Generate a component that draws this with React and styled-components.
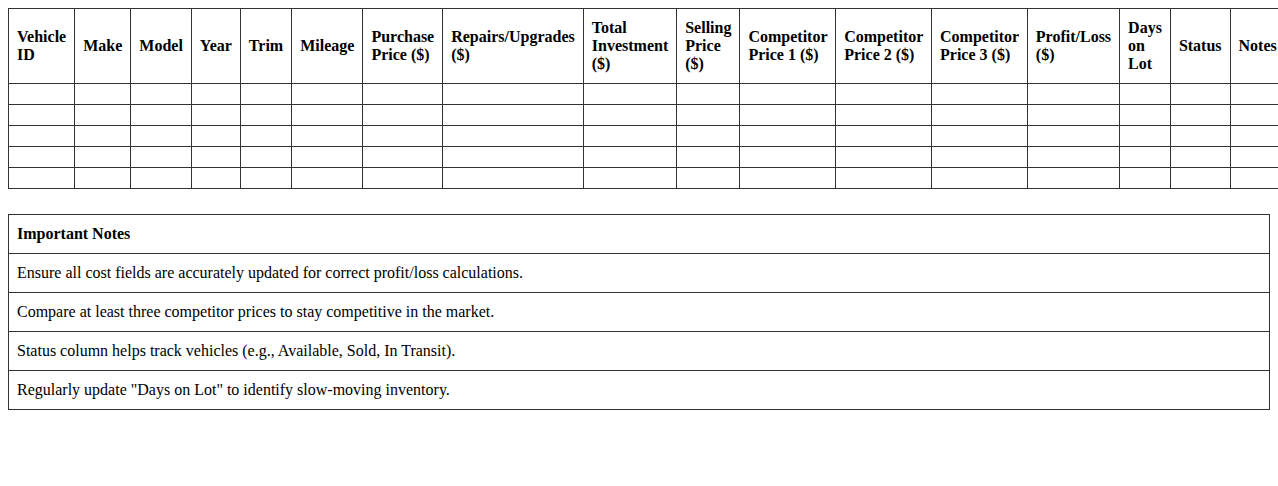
import React from "react";
import styled, { createGlobalStyle } from "styled-components";

const Global = createGlobalStyle`
  html, body { background: #fff; }
  body {
    margin: 8px 0 8px 8px;
    font-family: "Liberation Serif", "Times New Roman", serif;
    font-size: 16px;
    color: #000;
  }
`;

const Table = styled.table`
  width: ${(p) => (p.$full ? "100%" : "auto")};
  border-collapse: collapse;
`;

const NotesSection = styled.section`
  margin: 25px 8px 0 0;
`;

const Th = styled.th`
  border: 1px solid #333;
  padding: 10px 8px;
  text-align: left;
  font-weight: bold;
  vertical-align: middle;
`;

const Td = styled.td`
  border: 1px solid #333;
  padding: 10px 8px;
  text-align: left;
`;

const columns = [
  "Vehicle ID",
  "Make",
  "Model",
  "Year",
  "Trim",
  "Mileage",
  "Purchase Price ($)",
  "Repairs/Upgrades ($)",
  "Total Investment ($)",
  "Selling Price ($)",
  "Competitor Price 1 ($)",
  "Competitor Price 2 ($)",
  "Competitor Price 3 ($)",
  "Profit/Loss ($)",
  "Days on Lot",
  "Status",
  "Notes",
];

const notes = [
  "Ensure all cost fields are accurately updated for correct profit/loss calculations.",
  "Compare at least three competitor prices to stay competitive in the market.",
  "Status column helps track vehicles (e.g., Available, Sold, In Transit).",
  'Regularly update "Days on Lot" to identify slow-moving inventory.',
];

export default function App() {
  return (
    <>
      <Global />
      <Table>
        <thead>
          <tr>
            {columns.map((c) => (
              <Th key={c}>{c}</Th>
            ))}
          </tr>
        </thead>
        <tbody>
          {[0, 1, 2, 3, 4].map((r) => (
            <tr key={r}>
              {columns.map((c) => (
                <Td key={c}></Td>
              ))}
            </tr>
          ))}
        </tbody>
      </Table>
      <NotesSection>
        <Table $full>
          <thead>
            <tr>
              <Th>Important Notes</Th>
            </tr>
          </thead>
          <tbody>
            {notes.map((n) => (
              <tr key={n}>
                <Td>{n}</Td>
              </tr>
            ))}
          </tbody>
        </Table>
      </NotesSection>
    </>
  );
}
